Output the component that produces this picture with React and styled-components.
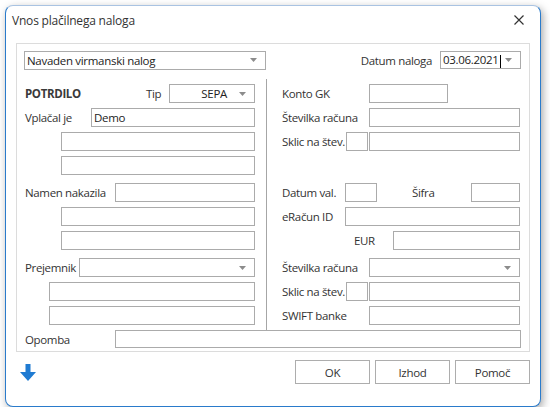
import styled, { createGlobalStyle } from "styled-components"

const GlobalStyle = createGlobalStyle`
  html, body {
    margin: 0;
    background: #fff;
  }
  body {
    font-family: "Open Sans", "Noto Sans", sans-serif;
    font-size: 11.5px;
    color: #333;
  }
`

const Dialog = styled.div`
  box-sizing: border-box;
  width: 536px;
  height: 402px;
  margin: 5px 0 0 5px;
  background: #fff;
  border: 1px solid #2a7bcb;
  border-top-color: #a9c3e2;
  border-radius: 8px;
  box-shadow: 2px 3px 8px rgba(0, 0, 0, 0.35);
  display: flex;
  flex-direction: column;
`

const TitleBar = styled.div`
  height: 28px;
  display: flex;
  align-items: center;
  justify-content: space-between;
  padding: 0 16px 0 6px;
  .title {
    font-size: 12px;
    letter-spacing: -0.2px;
  }
`

const Panel = styled.div`
  margin: 9px 10px 0;
  border: 1px solid #dcdcdc;
  padding: 7px 8px 3px;
`

const TopRow = styled.div`
  display: flex;
  align-items: center;
  height: 18px;
`

const Columns = styled.div`
  display: flex;
  margin-top: 10px;
`

const Column = styled.div`
  width: ${p => p.$w}px;
  padding-top: 5px;
`

const Divider = styled.div`
  width: 1px;
  background: #a6a6a6;
  margin: 0 15px 0 11px;
`

const Row = styled.div`
  display: flex;
  align-items: center;
  height: ${p => p.$h || 19}px;
  margin-top: ${p => (p.$gap ? 8 : 0)}px;
  margin-bottom: ${p => (p.$last ? 0 : 5)}px;
`

const Label = styled.div`
  flex-shrink: 0;
  width: ${p => (p.$w ? `${p.$w}px` : "auto")};
  margin-left: ${p => p.$ml || 0}px;
  margin-right: ${p => p.$mr || 0}px;
  white-space: nowrap;
  letter-spacing: -0.35px;
  font-weight: ${p => (p.$bold ? 700 : 400)};
  color: ${p => (p.$bold ? "#3a3a3a" : "#333")};
`

const Box = styled.div`
  box-sizing: border-box;
  height: ${p => p.$h || 19}px;
  ${p => (p.$w ? `width: ${p.$w}px; flex-shrink: 0;` : "flex: 1;")}
  margin-left: ${p => p.$ml || 0}px;
  border: 1px solid #ababab;
  background: #fff;
  display: flex;
  align-items: center;
  justify-content: ${p => (p.$right ? "flex-end" : "space-between")};
  padding: 0 8px 0 2px;
  letter-spacing: -0.3px;
  color: #222;
  white-space: nowrap;
`

const Caret = styled.span`
  display: inline-block;
  width: 1px;
  height: 13px;
  background: #000;
  margin-left: 1px;
  vertical-align: middle;
`

const Footer = styled.div`
  display: flex;
  align-items: flex-start;
  padding: 8px 10px 0 14px;
  .spacer {
    flex: 1;
  }
  svg {
    margin-top: 4px;
  }
`

const Button = styled.button`
  box-sizing: border-box;
  width: 75px;
  height: 24px;
  margin-left: ${p => (p.$first ? 0 : 5)}px;
  border: 1px solid #adadad;
  background: #fff;
  font-family: inherit;
  font-size: 11.5px;
  letter-spacing: -0.3px;
  color: #333;
  padding: 0;
`

function Arrow() {
  return (
    <svg width="7" height="4" viewBox="0 0 7 4">
      <polygon points="0,0 7,0 3.5,4" fill="#8c8c8c" />
    </svg>
  )
}

function Combo({ text, w, right, ml }) {
  return (
    <Box $w={w} $right={right} $ml={ml}>
      {right ? <span style={{ marginRight: 12 }}>{text}</span> : <span>{text}</span>}
      <Arrow />
    </Box>
  )
}

export default function App() {
  return (
    <>
      <GlobalStyle />
      <Dialog>
        <TitleBar>
          <span className="title">Vnos plačilnega naloga</span>
          <svg width="10" height="10" viewBox="0 0 10 10">
            <path d="M0.5 0.5 L9.5 9.5 M9.5 0.5 L0.5 9.5" stroke="#333" strokeWidth="1.2" />
          </svg>
        </TitleBar>

        <Panel>
          <TopRow>
            <Combo text="Navaden virmanski nalog" w={242} ml={-1} />
            <div style={{ flex: 1 }} />
            <Label $mr={8}>Datum naloga</Label>
            <Box $w={81} $h={18}>
              <span>03.06.2021<Caret /></span>
              <Arrow />
            </Box>
          </TopRow>

          <Columns>
            <Column $w={230}>
              <Row>
                <Label $w={121} $bold>POTRDILO</Label>
                <Label $w={23}>Tip</Label>
                <Combo text="SEPA" right />
              </Row>
              <Row>
                <Label $w={66}>Vplačal je</Label>
                <Box>Demo</Box>
              </Row>
              <Row><Box $ml={36} /></Row>
              <Row><Box $ml={36} /></Row>

              <Row $gap>
                <Label $w={90}>Namen nakazila</Label>
                <Box />
              </Row>
              <Row><Box $ml={36} /></Row>
              <Row><Box $ml={36} /></Row>

              <Row $gap>
                <Label $w={54}>Prejemnik</Label>
                <Combo />
              </Row>
              <Row><Box $ml={24} /></Row>
              <Row><Box $ml={24} /></Row>
            </Column>

            <Divider />

            <Column $w={238}>
              <Row>
                <Label $w={87}>Konto GK</Label>
                <Box $w={79} />
              </Row>
              <Row>
                <Label $w={87}>Številka računa</Label>
                <Box />
              </Row>
              <Row>
                <Label $w={64}>Sklic na štev.</Label>
                <Box $w={22} />
                <Box $ml={1} />
              </Row>
              <Row />

              <Row $gap>
                <Label $w={63}>Datum val.</Label>
                <Box $w={32} />
                <Label $w={59} $ml={35}>Šifra</Label>
                <Box />
              </Row>
              <Row>
                <Label $w={63}>eRačun ID</Label>
                <Box />
              </Row>
              <Row>
                <Label $w={39} $ml={72}>EUR</Label>
                <Box />
              </Row>

              <Row $gap>
                <Label $w={87}>Številka računa</Label>
                <Combo />
              </Row>
              <Row>
                <Label $w={64}>Sklic na štev.</Label>
                <Box $w={22} />
                <Box $ml={1} />
              </Row>
              <Row>
                <Label $w={87}>SWIFT banke</Label>
                <Box />
              </Row>
            </Column>
          </Columns>

          <Row $last $h={18}>
            <Label $w={90}>Opomba</Label>
            <Box $h={18} />
          </Row>
        </Panel>

        <Footer>
          <svg width="16" height="17" viewBox="0 0 16 17">
            <polygon points="5.5,0 10.5,0 10.5,8 16,8 8,17 0,8 5.5,8" fill="#1f7bd2" />
          </svg>
          <div className="spacer" />
          <Button $first>OK</Button>
          <Button>Izhod</Button>
          <Button>Pomoč</Button>
        </Footer>
      </Dialog>
    </>
  )
}
